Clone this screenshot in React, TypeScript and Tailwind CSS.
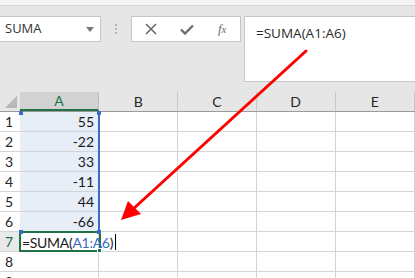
import React from "react";

const cols = ["A", "B", "C", "D", "E"];
const widths = [80, 80, 79, 80, 80];
const values = ["55", "-22", "33", "-11", "44", "-66"];

export default function App() {
  const rows = [1, 2, 3, 4, 5, 6, 7, 8, 9];
  return (
    <div className="relative w-[415px] h-[278px] overflow-hidden bg-[#e6e6e6]" style={{ fontFamily: "'Open Sans', 'Noto Sans', sans-serif" }}>
      {/* ribbon remnant */}
      <div className="h-[6px] bg-[#f3f3f3] border-b border-[#d5d5d5] overflow-hidden relative">
        <div className="flex items-end h-[6px] text-[12px] leading-none text-[#555] -mt-[7px]">
          <span className="ml-[8px]">Portapapeles</span>
          <span className="ml-[6px] text-[10px]">⌐</span>
          <span className="ml-[68px]">Fuente</span>
          <span className="ml-[180px]">Alin</span>
        </div>
      </div>
      {/* formula bar */}
      <div className="flex items-start pt-[10px] h-[86px]">
        <div className="w-[101px] h-[26px] bg-white border border-l-0 border-[#c6c6c6] flex items-center justify-between pl-[5px] pr-[6px]">
          <span className="text-[13px] text-[#333]">SUMA</span>
          <svg width="8" height="5" viewBox="0 0 8 5"><path d="M0 0 H8 L4 5 Z" fill="#777" /></svg>
        </div>
        <div className="w-[30px] h-[26px] flex flex-col items-center justify-center gap-[2px]">
          <div className="w-[2px] h-[2px] bg-[#b5b5b5]" />
          <div className="w-[2px] h-[2px] bg-[#b5b5b5]" />
          <div className="w-[2px] h-[2px] bg-[#b5b5b5]" />
        </div>
        <div className="w-[110px] h-[26px] bg-white border border-[#c6c6c6] flex items-center">
          <div className="w-[36px] flex justify-center ml-[1px]">
            <svg width="12" height="12" viewBox="0 0 12 12"><path d="M1 1 L11 11 M11 1 L1 11" stroke="#6b6b6b" strokeWidth="1.6" /></svg>
          </div>
          <div className="w-[36px] flex justify-center">
            <svg width="14" height="11" viewBox="0 0 14 11"><path d="M1 5.5 L5 9.5 L13 1.5" stroke="#6b6b6b" strokeWidth="2.4" fill="none" /></svg>
          </div>
          <div className="w-[36px] flex justify-center">
            <span className="text-[13px] italic text-[#6b6b6b]" style={{ fontFamily: "'Liberation Serif', serif" }}>f<span className="text-[11px]">x</span></span>
          </div>
        </div>
        <div className="ml-[3px] flex-1 h-[66px] bg-white border border-r-0 border-[#c6c6c6] pl-[11px] pt-[3px]">
          <span className="text-[13.5px] text-[#2a2a2a]">=SUMA(A1:A6)</span>
        </div>
      </div>
      {/* grid */}
      <div className="relative bg-white" style={{ fontFamily: "Lato, 'Open Sans', sans-serif" }}>
        {/* header */}
        <div className="flex h-[20px] bg-[#e6e6e6] border-b border-[#9b9b9b]">
          <div className="w-[20px] h-[19px] flex items-end justify-end pr-[3px] pb-[3px]">
            <svg width="12" height="12" viewBox="0 0 12 12"><path d="M12 0 V12 H0 Z" fill="#b8b8b8" /></svg>
          </div>
          {cols.map((c, i) => (
            <div
              key={c}
              className={
                i === 0
                  ? "h-[19px] bg-[#d2d2d2] border-b-2 border-[#217346] flex items-center justify-center text-[14px] text-[#217346] border-r border-r-[#bdbdbd]"
                  : "h-[19px] flex items-center justify-center text-[14px] text-[#262626] border-r border-r-[#c8c8c8]"
              }
              style={{ width: widths[i] }}
            >
              {c}
            </div>
          ))}
        </div>
        {rows.map((r) => (
          <div key={r} className="flex h-[20px]">
            <div className={
              r === 7
                ? "w-[20px] h-[20px] bg-[#e9e9e9] border-b border-[#d4d4d4] flex items-center pl-[5px] text-[14px] text-[#217346]"
                : "w-[20px] h-[20px] bg-white border-b border-[#d4d4d4] flex items-center pl-[5px] text-[14px] text-[#262626]"
            }>
              {r}
            </div>
            {widths.map((w, i) => (
              <div
                key={i}
                className={
                  i === 0 && r <= 6
                    ? "h-[20px] bg-[#e8eef8] border-b border-r border-[#d4d4d4] flex items-center justify-end pr-[4px] text-[14px] text-[#1a1a1a]"
                    : "h-[20px] bg-white border-b border-r border-[#d4d4d4] flex items-center justify-end pr-[4px] text-[14px] text-[#1a1a1a]"
                }
                style={{ width: w }}
              >
                {i === 0 && r <= 6 ? values[r - 1] : ""}
              </div>
            ))}
          </div>
        ))}
        {/* blue range border */}
        <div className="absolute left-[98px] top-[20px] w-[2px] h-[119px] bg-[#3b6dc4]" />
        <div className="absolute left-[19px] top-[19px] w-[4px] h-[4px] bg-[#3b6dc4]" />
        <div className="absolute left-[97px] top-[19px] w-[4px] h-[4px] bg-[#3b6dc4]" />
        {/* active cell A7 */}
        <div className="absolute left-[19px] top-[139px] w-[82px] h-[21px] border-2 border-[#217346]" />
        <div className="absolute left-[19px] top-[138px] w-[4px] h-[4px] bg-[#3b6dc4]" />
        <div className="absolute left-[97px] top-[138px] w-[4px] h-[4px] bg-[#3b6dc4]" />
        <div className="absolute left-[97px] top-[156px] w-[5px] h-[5px] bg-[#217346] border border-white" />
        <div className="absolute left-[22px] top-[140px] h-[20px] flex items-center text-[14px] tracking-[-0.3px] text-[#1a1a1a] bg-transparent">
          <span>=SUMA(</span>
          <span className="text-[#3b6dc4]">A1:A6</span>
          <span>)</span>
          <span className="ml-[2px] w-[1px] h-[16px] bg-black" />
        </div>
      </div>
      {/* red arrow */}
      <svg className="absolute left-0 top-0" width="415" height="278" viewBox="0 0 415 278">
        <line x1="306" y1="51" x2="132" y2="210" stroke="#ff0000" strokeWidth="3" strokeLinecap="round" />
        <path d="M121 220 L128 201 L141 214 Z" fill="#ff0000" />
      </svg>
    </div>
  );
}
